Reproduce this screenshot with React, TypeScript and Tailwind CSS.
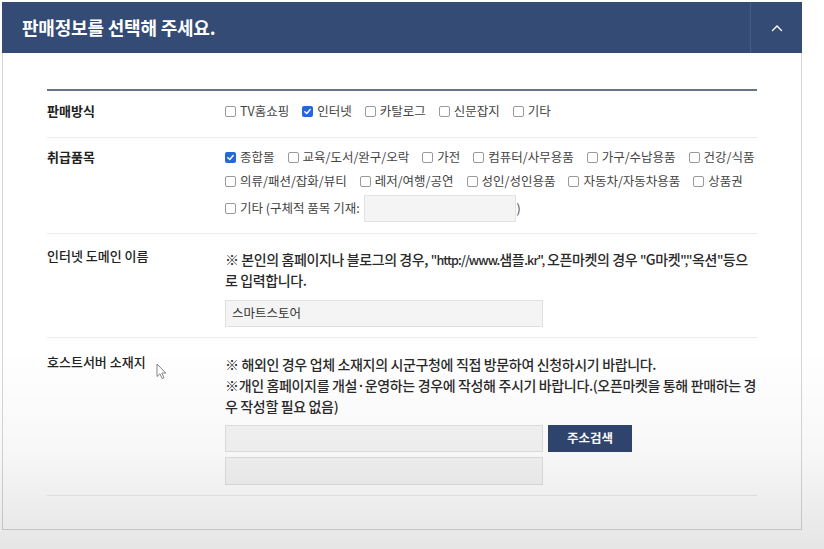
import React from "react";

function Check({ checked = false }: { checked?: boolean }) {
  if (checked) {
    return (
      <span className="flex h-[11px] w-[11px] shrink-0 items-center justify-center rounded-[2px] bg-[#2369d3]">
        <svg width="9" height="9" viewBox="0 0 10 10" fill="none">
          <path d="M2 5.2 L4.2 7.3 L8 2.8" stroke="#fff" strokeWidth="1.6" strokeLinecap="round" strokeLinejoin="round" />
        </svg>
      </span>
    );
  }
  return <span className="h-[11px] w-[11px] shrink-0 rounded-[2px] border border-[#9a9a9a] bg-white" />;
}

function Opt({ label, checked }: { label: string; checked?: boolean }) {
  return (
    <span className="flex items-center gap-[4px]">
      <Check checked={checked} />
      <span>{label}</span>
    </span>
  );
}

function OptLine({ items }: { items: { label: string; checked?: boolean }[] }) {
  return (
    <div className="flex h-[24px] items-center gap-x-[13px] whitespace-nowrap text-[12.5px] text-[#444]">
      {items.map((it) => (
        <Opt key={it.label} label={it.label} checked={it.checked} />
      ))}
    </div>
  );
}

export default function App() {
  return (
    <div className="relative h-[549px] w-[824px] overflow-hidden bg-white font-['Noto_Sans_CJK_KR','Noto_Sans',sans-serif] text-[#222]">
      <div className="w-[802px] pl-[2px] pt-[2px]">
        {/* header */}
        <div className="flex h-[51px] items-center justify-between bg-[#344b75] pl-[20px]">
          <h1 className="text-[18px] font-bold tracking-[-0.2px] text-white">판매정보를 선택해 주세요.</h1>
          <div className="flex h-full w-[52px] items-center justify-center border-l border-white/10">
            <svg width="12" height="8" viewBox="0 0 12 8" fill="none">
              <path d="M1.5 6.5 L6 2 L10.5 6.5" stroke="#fff" strokeWidth="1.4" strokeLinecap="round" strokeLinejoin="round" />
            </svg>
          </div>
        </div>

        {/* panel */}
        <div className="h-[477px] border-x border-b border-[#d6d6d8] pl-[44px] pr-[44px] pt-[36px]">
          <div className="h-[2px] bg-[#6a7285]" />

          {/* 판매방식 */}
          <div className="flex border-b border-[#ececec] pb-[14px] pt-[8px]">
            <div className="flex h-[24px] w-[178px] shrink-0 items-center text-[13px] font-bold">판매방식</div>
            <OptLine
              items={[
                { label: "TV홈쇼핑" },
                { label: "인터넷", checked: true },
                { label: "카탈로그" },
                { label: "신문잡지" },
                { label: "기타" },
              ]}
            />
          </div>

          {/* 취급품목 */}
          <div className="flex border-b border-[#ececec] pb-[11px] pt-[7px]">
            <div className="flex h-[24px] w-[178px] shrink-0 items-center text-[13px] font-bold">취급품목</div>
            <div className="flex flex-col">
              <OptLine
                items={[
                  { label: "종합몰", checked: true },
                  { label: "교육/도서/완구/오락" },
                  { label: "가전" },
                  { label: "컴퓨터/사무용품" },
                  { label: "가구/수납용품" },
                  { label: "건강/식품" },
                ]}
              />
              <OptLine
                items={[
                  { label: "의류/패션/잡화/뷰티" },
                  { label: "레저/여행/공연" },
                  { label: "성인/성인용품" },
                  { label: "자동차/자동차용품" },
                  { label: "상품권" },
                ]}
              />
              <div className="mt-[2px] flex h-[27px] items-center whitespace-nowrap text-[12.5px] text-[#444]">
                <Opt label="기타 (구체적 품목 기재:" />
                <span className="ml-[4px] h-[27px] w-[152px] border border-[#e2e2e2] bg-[#f4f4f4]" />
                <span className="ml-[1px]">)</span>
              </div>
            </div>
          </div>

          {/* 인터넷 도메인 이름 */}
          <div className="flex border-b border-[#ececec] pb-[10px]">
            <div className="w-[178px] shrink-0 pt-[12px] text-[13px] font-medium leading-[20px]">인터넷 도메인 이름</div>
            <div className="flex flex-col pt-[15px]">
              <p className="whitespace-nowrap text-[14px] font-medium leading-[21px] tracking-[-0.4px] text-[#2a2a2a]">
                ※ 본인의 홈페이지나 블로그의 경우, <span className="text-[12.5px] tracking-[-0.9px]">"http://www.</span>샘플<span className="text-[12.5px] tracking-[-0.9px]">.kr",</span> 오픈마켓의 경우 <span className="text-[12.5px] tracking-[-0.6px]">"</span>G마켓<span className="text-[12.5px] tracking-[-0.6px]">","</span>옥션<span className="text-[12.5px] tracking-[-0.6px]">"</span>등으
                <br />로 입력합니다.
              </p>
              <div className="mt-[9px] flex h-[27px] w-[318px] items-center border border-[#e0e0e0] bg-[#f4f4f4] pl-[6px] text-[12.5px] text-[#333]">
                스마트스토어
              </div>
            </div>
          </div>

          {/* 호스트서버 소재지 */}
          <div className="flex border-b border-[#ececec] pb-[10px]">
            <div className="w-[178px] shrink-0 pt-[14px] text-[13px] font-medium leading-[20px]">호스트서버 소재지</div>
            <div className="flex flex-col pt-[16px]">
              <p className="whitespace-nowrap text-[14px] font-medium leading-[21px] tracking-[-0.35px] text-[#2a2a2a]">
                ※ 해외인 경우 업체 소재지의 시군구청에 직접 방문하여 신청하시기 바랍니다.
                <br />
                ※개인 홈페이지를 개설·운영하는 경우에 작성해 주시기 바랍니다.(오픈마켓을 통해 판매하는 경
                <br />우 작성할 필요 없음)
              </p>
              <div className="mt-[8px] flex gap-[5px]">
                <span className="h-[27px] w-[318px] border border-[#e0e0e0] bg-[#f4f4f4]" />
                <button className="h-[27px] w-[84px] bg-[#2f4670] text-[12.5px] font-bold text-white">주소검색</button>
              </div>
              <span className="mt-[5px] h-[28px] w-[318px] border border-[#e0e0e0] bg-[#f4f4f4]" />
            </div>
          </div>
        </div>
      </div>

      {/* mouse cursor */}
      <svg className="absolute left-[156px] top-[363px]" width="11" height="17" viewBox="0 0 11 17" fill="none">
        <path d="M1 1 L1 13.5 L4 10.8 L6.2 15.6 L8 14.8 L5.9 10.1 L9.8 10.1 Z" fill="#fff" stroke="#777" strokeWidth="0.9" strokeLinejoin="round" />
      </svg>

      {/* video vignette */}
      <div className="pointer-events-none absolute inset-x-0 bottom-0 h-[200px] bg-gradient-to-b from-black/0 via-black/[0.03] to-black/[0.1]" />
    </div>
  );
}
